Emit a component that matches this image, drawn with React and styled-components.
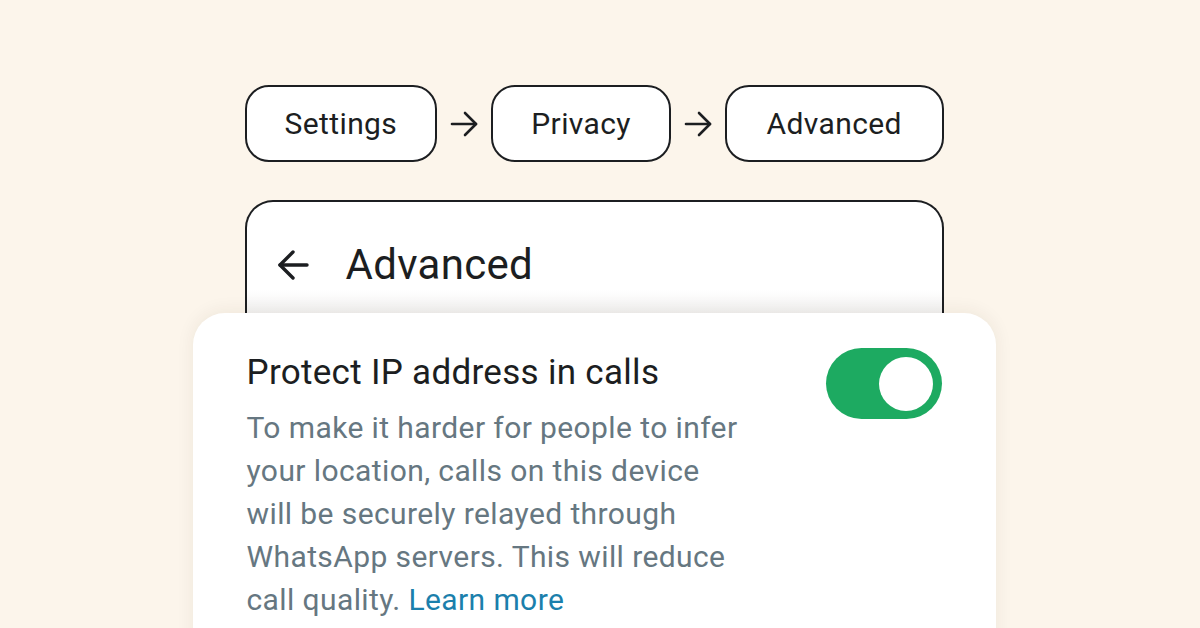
import styled, { createGlobalStyle } from "styled-components"

const GlobalStyle = createGlobalStyle`
    html, body {
        margin: 0;
        padding: 0;
        background: #fcf5eb;
        font-family: Roboto, "Noto Sans", "Liberation Sans", sans-serif;
    }
`

const Page = styled.div`
    width: 1200px;
    height: 628px;
    overflow: hidden;
    display: flex;
    justify-content: center;
    align-items: flex-start;
    padding: 85px 12px 0 0;
    box-sizing: border-box;
`

const Stack = styled.div`
    width: 803px;
    display: flex;
    flex-direction: column;
    flex-shrink: 0;
`

const Crumbs = styled.div`
    display: flex;
    align-items: center;
    gap: 13px;
    padding: 0 52px;
`

const Pill = styled.div`
    height: 77px;
    box-sizing: border-box;
    padding: 0 38px;
    display: flex;
    align-items: center;
    justify-content: center;
    border: 2px solid #1c1e21;
    border-radius: 24px;
    background: #fff;
    font-size: 30px;
    letter-spacing: 0.4px;
    color: #1c1e21;
    flex: ${props => props.grow ? 1 : "none"};
`

const HeaderCard = styled.div`
    margin: 38px 52px 0;
    height: 150px;
    flex-shrink: 0;
    box-sizing: border-box;
    border: 2px solid #1c1e21;
    border-bottom: none;
    border-radius: 28px 28px 0 0;
    background: linear-gradient(#fff 0, #fff 88px, #f1f0ef 113px);
    display: flex;
    align-items: flex-start;
    gap: 37px;
    padding: 40px 0 0 30px;
`

const HeaderTitle = styled.div`
    font-size: 42px;
    letter-spacing: 0.3px;
    line-height: 46px;
    color: #1c1e21;
`

const Card = styled.div`
    margin-top: -37px;
    height: 360px;
    flex-shrink: 0;
    background: #fff;
    border-radius: 32px 32px 0 0;
    box-shadow: 0 -2px 18px rgba(60, 40, 20, 0.07);
    display: flex;
    justify-content: space-between;
    align-items: flex-start;
    padding: 40px 54px 0 54px;
    box-sizing: border-box;
`

const TextBlock = styled.div`
    display: flex;
    flex-direction: column;
    gap: 13px;
`

const Title = styled.div`
    font-size: 35px;
    letter-spacing: 0.3px;
    line-height: 40px;
    color: #1c1e21;
`

const Body = styled.p`
    margin: 0;
    max-width: 505px;
    font-size: 30px;
    letter-spacing: 0.4px;
    line-height: 43px;
    color: #667781;
`

const Link = styled.a`
    color: #1b7fac;
    text-decoration: none;
`

const Toggle = styled.div`
    margin-top: -5px;
    width: 116px;
    height: 71px;
    flex-shrink: 0;
    border-radius: 36px;
    background: #1daa61;
    display: flex;
    align-items: center;
    justify-content: ${props => props.on ? "flex-end" : "flex-start"};
    padding: 0 9px;
    box-sizing: border-box;
`

const Knob = styled.div`
    width: 54px;
    height: 54px;
    border-radius: 50%;
    background: #fff;
`

function ArrowRight() {
    return (
        <svg width="28" height="28" viewBox="0 0 28 28" fill="none" stroke="#1c1e21" strokeWidth="2.6" strokeLinecap="round" strokeLinejoin="round">
            <path d="M2 14 H26" />
            <path d="M15 3 L26 14 L15 25" />
        </svg>
    )
}

function ArrowBack() {
    return (
        <svg width="32" height="46" viewBox="0 0 32 46" fill="none" stroke="#1c1e21" strokeWidth="3.4" strokeLinecap="round" strokeLinejoin="round">
            <path d="M30 23 H3" />
            <path d="M16 10 L3 23 L16 36" />
        </svg>
    )
}

export default function App() {
    return <>
        <GlobalStyle />
        <Page>
            <Stack>
                <Crumbs>
                    <Pill>Settings</Pill>
                    <ArrowRight />
                    <Pill>Privacy</Pill>
                    <ArrowRight />
                    <Pill grow>Advanced</Pill>
                </Crumbs>
                <HeaderCard>
                    <ArrowBack />
                    <HeaderTitle>Advanced</HeaderTitle>
                </HeaderCard>
                <Card>
                    <TextBlock>
                        <Title>Protect IP address in calls</Title>
                        <Body>
                            To make it harder for people to infer your location, calls on this device will be securely relayed through WhatsApp servers. This will reduce call quality. <Link href="#">Learn more</Link>
                        </Body>
                    </TextBlock>
                    <Toggle on>
                        <Knob />
                    </Toggle>
                </Card>
            </Stack>
        </Page>
    </>
}
